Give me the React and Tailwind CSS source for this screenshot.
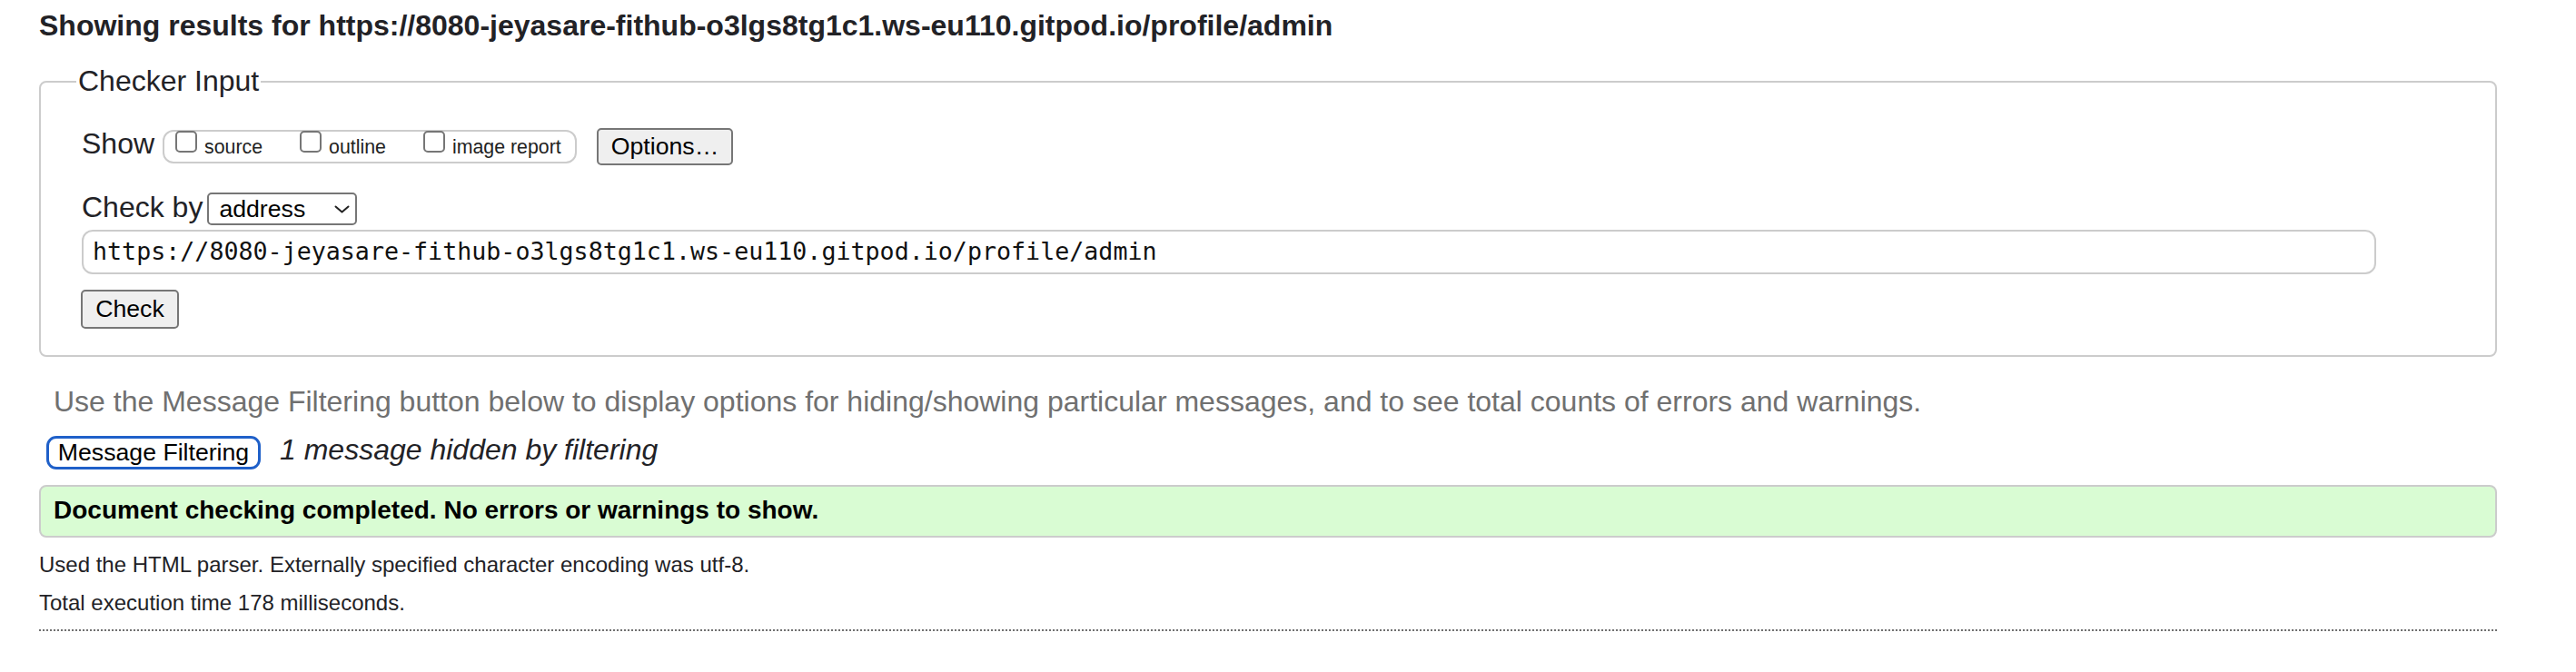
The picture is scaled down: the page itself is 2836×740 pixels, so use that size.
import React from 'react';

const url = 'https://8080-jeyasare-fithub-o3lgs8tg1c1.ws-eu110.gitpod.io/profile/admin';

const ShowOption = ({ label, first }) => (
  <label className={`flex items-start ${first ? '' : 'ml-[41px]'}`}>
    <input
      type="checkbox"
      className="appearance-none w-[24px] h-[24px] mt-[-1px] border-2 border-[#767676] rounded-[5px] bg-white"
    />
    <span className="ml-[8px] mt-[7px] text-[21.33px] leading-none text-[#222]">{label}</span>
  </label>
);

const App = () => {
  return (
    <div
      className="w-[2836px] h-[740px] bg-white overflow-hidden"
      style={{ fontFamily: '"Liberation Sans", Arial, Helvetica, sans-serif' }}
    >
      <div className="ml-[43px] w-[2706px] pt-[12px]">
        {/* Heading */}
        <h2 className="text-[32px] leading-none font-bold text-[#222226] whitespace-nowrap">
          Showing results for {url}
        </h2>

        {/* Checker Input fieldset */}
        <div className="mt-[45px] border-2 border-[#cccccc] rounded-[8px] pl-[45px] pb-[29px]">
          <div className="mt-[-18px] ml-[-6px] w-fit bg-white px-[2px] text-[32px] leading-none text-[#222226]">
            Checker Input
          </div>

          {/* Show row */}
          <div className="mt-[36px] flex items-start h-[41px]">
            <span className="mt-[1px] text-[32px] leading-none text-[#222226]">Show</span>
            <div className="ml-[9px] mt-[2px] w-[456px] h-[37px] border-2 border-[#cccccc] rounded-[12px] pl-[12px] flex items-start">
              <ShowOption label="source" first />
              <ShowOption label="outline" />
              <ShowOption label="image report" />
            </div>
            <button className="ml-[22px] w-[150px] h-[41px] bg-[#efefef] border-2 border-[#767676] rounded-[5px] text-[26.67px] leading-none text-black">
              Options…
            </button>
          </div>

          {/* Check by row */}
          <div className="mt-[30px] flex items-start h-[36px]">
            <span className="text-[32px] leading-none text-[#222226]">Check by</span>
            <div className="ml-[5px] w-[165px] h-[36px] border-2 border-[#767676] rounded-[5px] bg-white pl-[11px] pr-[6px] flex items-center justify-between">
              <span className="text-[26.67px] leading-none text-black">address</span>
              <svg width="17" height="9" viewBox="0 0 17 9" fill="none">
                <path d="M1.5 1.5 L8.5 7.5 L15.5 1.5" stroke="#222" strokeWidth="2" strokeLinecap="round" strokeLinejoin="round" />
              </svg>
            </div>
          </div>

          {/* URL input */}
          <div className="mt-[5px] w-[2526px] h-[49px] border-2 border-[#cccccc] rounded-[12px] pl-[10px] flex items-center">
            <span
              className="text-[26.67px] leading-none text-[#111]"
              style={{ fontFamily: '"DejaVu Sans Mono", "Liberation Mono", monospace' }}
            >
              {url}
            </span>
          </div>

          {/* Check button */}
          <button className="mt-[17px] ml-[-1px] w-[108px] h-[43px] bg-[#efefef] border-2 border-[#767676] rounded-[5px] text-[26.67px] leading-none text-black block">
            Check
          </button>
        </div>

        {/* Filtering hint */}
        <p className="mt-[33px] ml-[16px] text-[32px] leading-none text-[#707070] whitespace-nowrap">
          Use the Message Filtering button below to display options for hiding/showing particular messages, and to see total counts of errors and warnings.
        </p>

        <div className="mt-[22px] flex items-start h-[37px]">
          <button className="ml-[8px] w-[236px] h-[37px] border-[3px] border-[#1f60c9] rounded-[11px] bg-white text-[26.67px] leading-none text-black">
            Message Filtering
          </button>
          <span className="ml-[21px] mt-[-1px] text-[32px] leading-none italic text-[#222226]">
            1 message hidden by filtering
          </span>
        </div>

        {/* Success box */}
        <div className="mt-[17px] border-2 border-[#cccccc] rounded-[8px] bg-[#d9fcd3] pl-[14px] pt-[12px] pb-[14px]">
          <p className="text-[28px] leading-none font-bold text-black">
            Document checking completed. No errors or warnings to show.
          </p>
        </div>

        <p className="mt-[18px] text-[24px] leading-none text-[#222226]">
          Used the HTML parser. Externally specified character encoding was utf-8.
        </p>
        <p className="mt-[18px] text-[24px] leading-none text-[#222226]">
          Total execution time 178 milliseconds.
        </p>

        <div className="mt-[17px] border-t-2 border-dotted border-[#707070]" />
      </div>
    </div>
  );
};

export default App;
